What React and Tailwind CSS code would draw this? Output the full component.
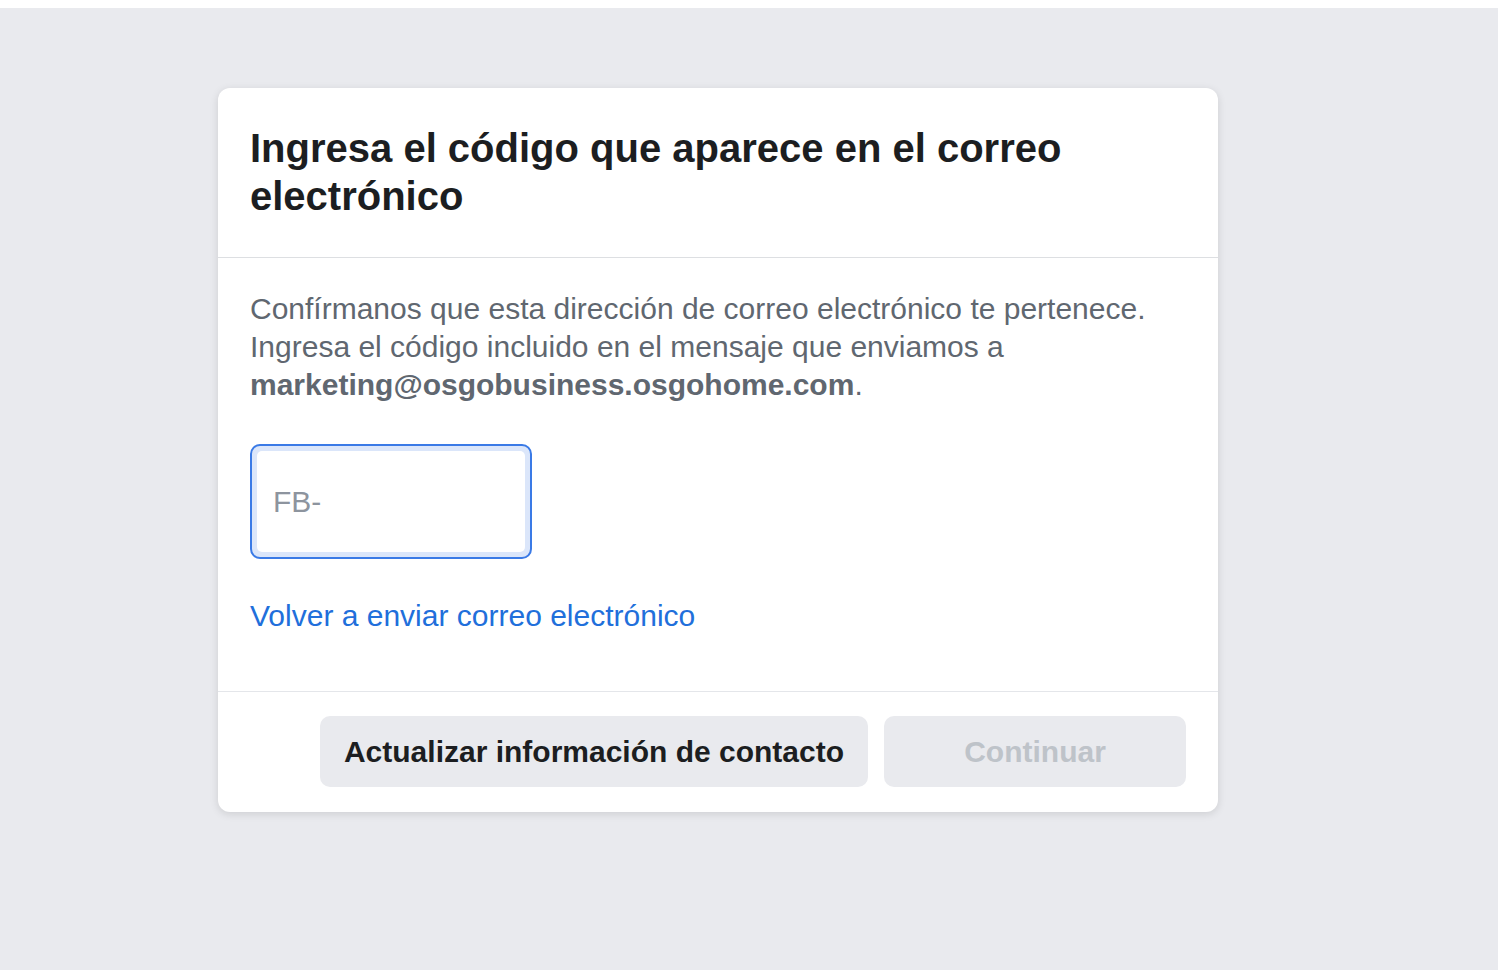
import React from "react";

const App = () => {
  return (
    <div className="min-h-[970px] w-full bg-white font-['Liberation_Sans',Arial,sans-serif]">
      <div className="h-2 bg-white" />
      <div className="min-h-[962px] bg-[#e9eaee] pl-[218px] pt-20">
        <div className="w-[1000px] overflow-hidden rounded-xl bg-white shadow-[0_2px_8px_rgba(0,0,0,0.12)]">
          {/* header */}
          <div className="border-b border-[#dddfe2] px-8 pt-9 pb-[37px]">
            <h1 className="max-w-[860px] text-[40px] font-bold leading-[48px] text-[#1c1e21]">
              Ingresa el código que aparece en el correo electrónico
            </h1>
          </div>

          {/* body */}
          <div className="px-8 pt-8 pb-14">
            <p className="w-[930px] text-[30px] leading-[38px] text-[#606770]">
              Confírmanos que esta dirección de correo electrónico te pertenece.
              Ingresa el código incluido en el mensaje que enviamos a{" "}
              <span className="font-bold">marketing@osgobusiness.osgohome.com</span>.
            </p>

            <div className="mt-10 h-[115px] w-[282px] rounded-[10px] border-2 border-[#3a7ae6] bg-[#dbe6fa] p-[5px]">
              <input
                type="text"
                placeholder="FB-"
                className="h-full w-full rounded-[5px] bg-white px-[16px] text-[30px] text-[#1c1e21] outline-none placeholder:text-[#8d949e]"
              />
            </div>

            <a href="#" className="mt-[38px] block text-[30px] leading-[38px] text-[#216fdb]">
              Volver a enviar correo electrónico
            </a>
          </div>

          {/* footer */}
          <div className="flex justify-end gap-4 border-t border-[#e4e6ea] px-8 pt-6 pb-[25px]">
            <button className="h-[71px] w-[548px] rounded-[10px] bg-[#e9eaee] text-[30px] font-bold text-[#1c1e21]">
              Actualizar información de contacto
            </button>
            <button
              disabled
              className="h-[71px] w-[302px] rounded-[10px] bg-[#e9eaee] text-[30px] font-bold text-[#bec3c9]"
            >
              Continuar
            </button>
          </div>
        </div>
      </div>
    </div>
  );
};

export default App;
